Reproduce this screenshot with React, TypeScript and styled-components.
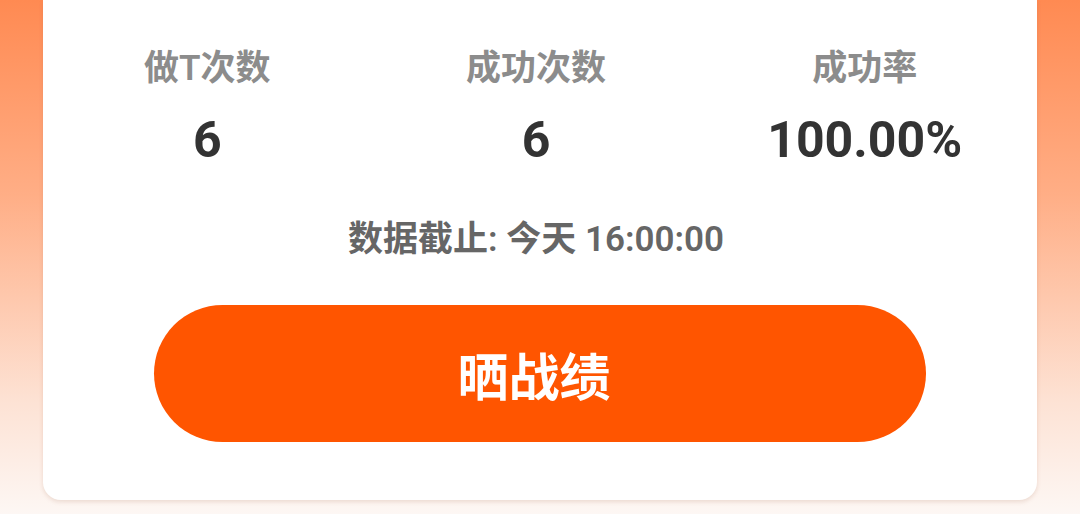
import React from 'react';
import styled, { createGlobalStyle } from 'styled-components';

//Styles
const GlobalStyle = createGlobalStyle`
  html, body {
    margin: 0;
    padding: 0;
  }
  body {
    font-family: Roboto, "Noto Sans CJK SC", sans-serif;
  }
`;
const Page = styled.div`
  height: 514px;
  box-sizing: border-box;
  padding: 0 43px 14px;
  background: linear-gradient(180deg, #ff8a52 0%, #ffae86 38%, #fde2d4 78%, #fdf7f4 100%);
  display: flex;
  flex-direction: column;
`;
const Card = styled.div`
  flex: 1;
  background: #ffffff;
  border-radius: 0 0 18px 18px;
  box-shadow: 0 2px 4px rgba(160, 100, 70, 0.18);
  display: flex;
  flex-direction: column;
  align-items: center;
  padding-top: 49px;
`;
const StatsRow = styled.div`
  align-self: stretch;
  display: grid;
  grid-template-columns: repeat(3, 1fr);
  padding: 0 8px 0 0;
`;
const Stat = styled.div`
  display: flex;
  flex-direction: column;
  align-items: center;
`;
const StatLabel = styled.div`
  font-size: 35px;
  line-height: 40px;
  font-weight: 600;
  color: #8c8c8c;
`;
const StatValue = styled.div`
  margin-top: 23px;
  font-size: 50px;
  line-height: 56px;
  font-weight: 700;
  color: #333333;
`;
const Deadline = styled.div`
  margin-top: 52px;
  padding-right: 8px;
  font-size: 35px;
  line-height: 40px;
  font-weight: 600;
  color: #666666;
`;
const ShareButton = styled.button`
  margin-top: 45px;
  width: 772px;
  height: 137px;
  padding: 0 12px 0 0;
  border: none;
  border-radius: 69px;
  background: #ff5500;
  color: #ffffff;
  font-family: Roboto, "Noto Sans CJK SC", sans-serif;
  font-size: 51px;
  font-weight: 700;
  cursor: pointer;
`;

//Data
const stats = [
  { label: '做T次数', value: '6' },
  { label: '成功次数', value: '6' },
  { label: '成功率', value: '100.00%' },
];

//JSX
export default function App() {
  return (
    <>
      <GlobalStyle />
      <Page>
        <Card>
          <StatsRow>
            {stats.map((s) => (
              <Stat key={s.label}>
                <StatLabel>{s.label}</StatLabel>
                <StatValue>{s.value}</StatValue>
              </Stat>
            ))}
          </StatsRow>
          <Deadline>数据截止: 今天 16:00:00</Deadline>
          <ShareButton>晒战绩</ShareButton>
        </Card>
      </Page>
    </>
  );
}
